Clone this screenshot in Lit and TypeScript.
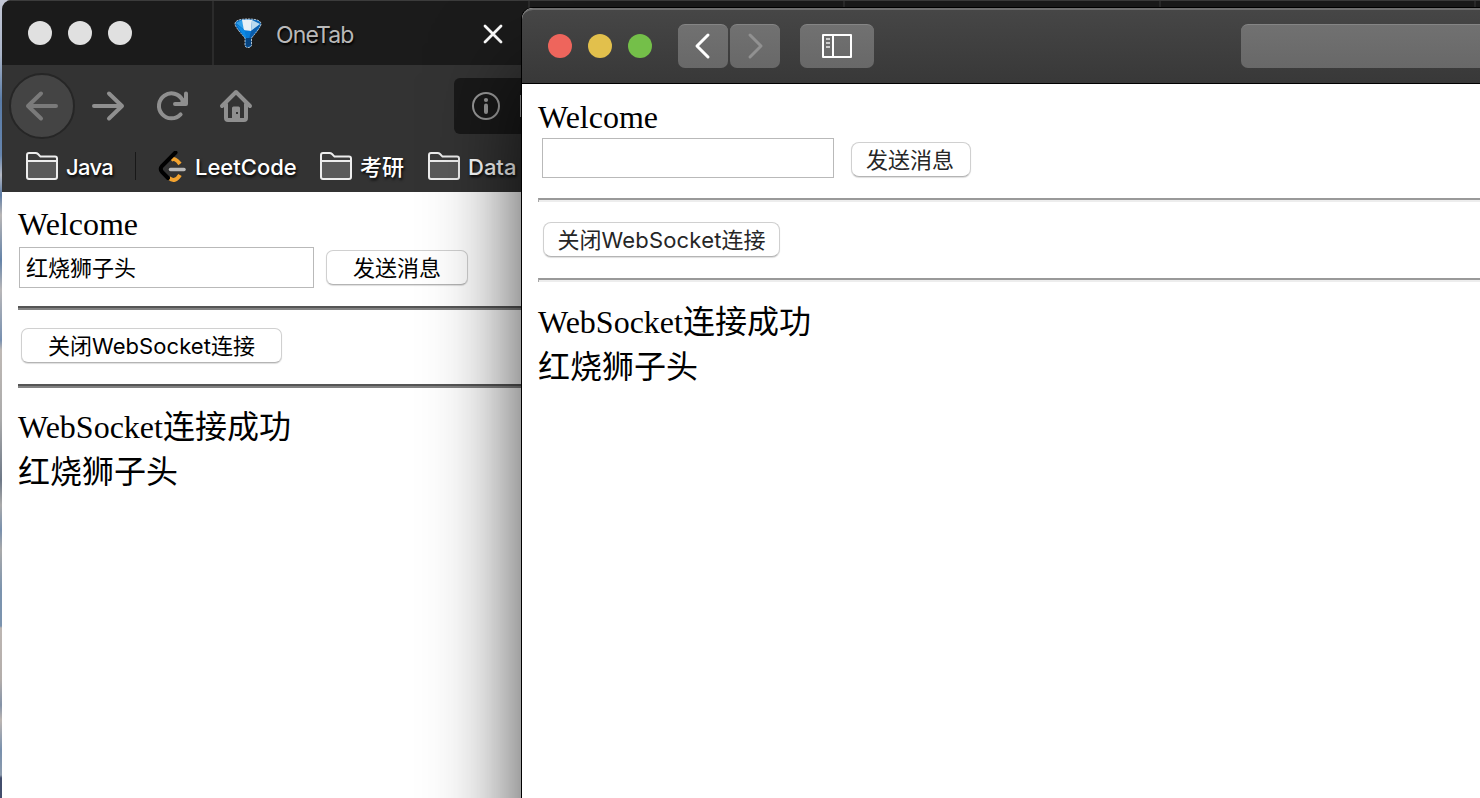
import { LitElement, html, css } from "lit";
import { customElement } from "lit/decorators.js";

const folder = html`<svg class="folder" width="34" height="30" viewBox="0 0 34 30">
  <path d="M2 26V4Q2 2 4 2H10.5Q12 2 13 3L15.5 5.6H30Q32 5.6 32 7.6V26Q32 28 30 28H4Q2 28 2 26Z" fill="#3c3c3c"/>
  <path d="M2 10H32V26Q32 28 30 28H4Q2 28 2 26Z" fill="#5a5a5a"/>
  <path d="M2 10H32M2 26V4Q2 2 4 2H10.5Q12 2 13 3L15.5 5.6H30Q32 5.6 32 7.6V26Q32 28 30 28H4Q2 28 2 26Z" fill="none" stroke="#ededed" stroke-width="2"/>
</svg>`;

@customElement("dark-browser")
class DarkBrowser extends LitElement {
  static styles = css`
    :host { display: flex; flex-direction: column; box-sizing: border-box; background: #fff; overflow: hidden;
      border-radius: 9px 0 0 0; font-family: Inter, "Noto Sans CJK SC", sans-serif; }
    .tabs { height: 65px; flex: none; box-sizing: border-box; border-top: 1px solid #3c3c3c; background: #1b1b1b; display: flex; }
    .lights { width: 210px; flex: none; box-sizing: border-box; padding: 20px 0 0 26px; display: flex; gap: 16px; }
    .light { width: 24px; height: 24px; border-radius: 50%; background: #e0e0e0; }
    .tab { width: 315.5px; flex: none; box-sizing: border-box; border-left: 2px solid #2b2b2b; display: flex; padding-left: 19px; }
    .gem { margin-top: 15px; flex: none; }
    .title { margin: 20px 0 0 13px; width: 200px; font-size: 23px; line-height: 28px; letter-spacing: -0.9px; color: #b9b9b9; text-shadow: 1px 2px 2px #000; }
    .close { margin: 22px 0 0 6px; flex: none; }
    .nav { height: 80px; flex: none; background: #333; display: flex; align-items: flex-start; }
    .back { width: 66px; height: 66px; margin: 8px 0 0 7px; box-sizing: border-box; border: 2px solid #262626; border-radius: 50%; background: #444; flex: none; display: flex; align-items: center; justify-content: center; }
    .ico { margin-top: 23px; flex: none; }
    .fwd { margin-left: 14px; }
    .reload { margin-left: 30px; }
    .home { margin-left: 30px; }
    .url { margin: 13px 0 0 201px; width: 900px; height: 56px; flex: none; border-radius: 6px; background: #191919; display: flex; align-items: center; }
    .info { margin-left: 17px; }
    .caret { margin-left: 19px; width: 2px; height: 22px; background: #999; }
    .marks { height: 47px; flex: none; background: #333; display: flex; align-items: flex-start; color: #fff; font-size: 22px; font-weight: 500; line-height: 30px; text-shadow: 1px 2px 3px #000; white-space: nowrap; }
    .marks svg { flex: none; margin-top: 6px; }
    .mark { display: flex; gap: 8px; margin-top: 0; }
    .mark span { margin-top: 7px; }
    .m1 { margin-left: 23px; width: 110px; gap: 7px; letter-spacing: -0.7px; }
    .rule { width: 1px; height: 28px; margin-top: 7px; background: #181818; }
    .m2 { margin-left: 21px; width: 162px; }
    .m3 { width: 108px; gap: 7px; }
    .m4 { gap: 7px; }
    .page { display: flex; flex-direction: column; padding: 14px 0 0 16px; color: #000; }
    .serif { font: 32px/36px "Liberation Serif", "Noto Sans CJK SC", serif; }
    .row { display: flex; margin-top: 5px; gap: 12px; padding-left: 1px; align-items: center; }
    .field { width: 295px; height: 41px; box-sizing: border-box; border: 1px solid #b9b9b9; padding-left: 6px; font-size: 22px; line-height: 40px; }
    .btn { box-sizing: border-box; height: 35px; border: 1px solid #d0d0d0; border-bottom-color: #b4b4b4; border-radius: 7px; background: #fff; font-size: 22px; line-height: 35px; text-align: center; box-shadow: 0 1px 1px #0002; white-space: nowrap; }
    .send { width: 142px; }
    .shut { width: 261px; margin: 18px 0 21px 3px; }
    .hr { height: 4px; box-sizing: border-box; border-top: 2px solid #555; background: #828282; }
    .first { margin-top: 18px; }
    .log { font: 32px/45px "Liberation Serif", "Noto Sans CJK SC", serif; margin-top: 17px; }
    .kern { letter-spacing: 0.05px; }
  `;
  render() {
    return html`
      <div class="tabs">
        <div class="lights"><i class="light"></i><i class="light"></i><i class="light"></i></div>
        <div class="tab">
          <svg class="gem" width="30" height="34" viewBox="0 0 30 34">
            <path d="M2 8Q2 3 15 3Q28 3 28 8Q28 11 18.500 22V29Q18 31.500 15 31.500Q12 31.500 12 29V22Q2 11 2 8Z" fill="#0768bd"/>
            <path d="M3 7L9 4L12 14.500Z" fill="#2f9fea"/><path d="M9 4Q14 3 19 4L18 15L11 14.500Z" fill="#e8f0f6"/>
            <path d="M19 4L27 8L18 15Z" fill="#b9d9ee"/><path d="M3 8L12 14.500L14 23L12 22Z" fill="#0c8ae6"/><path d="M18 15L27 8.500L18 22H16Z" fill="#0a5cab"/><path d="M11.500 14.500L18 15L16 23H14Z" fill="#087bd8"/><path d="M12.500 22H18V29.500L15 31L12.500 29.500Z" fill="#06437f"/>
            <path d="M2 8Q2 3 15 3Q28 3 28 8Q28 11 18.500 22V29Q18 31.500 15 31.500Q12 31.500 12 29V22Q2 11 2 8Z" fill="none" stroke="#e6eef5" stroke-opacity=".85" stroke-width=".9" stroke-dasharray="2.200 .8"/>
          </svg>
          <span class="title">OneTab</span>
          <svg class="close" width="22" height="22" viewBox="0 0 22 22"><path d="M3 3L19 19M19 3L3 19" stroke="#fff" stroke-width="2.8" stroke-linecap="round"/></svg>
        </div>
        <div class="tab"></div><div class="tab"></div><div class="tab"></div><div class="tab"></div>
      </div>
      <div class="nav">
        <div class="back"><svg width="36" height="36" viewBox="0 0 36 36"><path d="M32 18H4M17 5.500L4 18L17 30.500" fill="none" stroke="#7a7a7a" stroke-width="4" stroke-linecap="round" stroke-linejoin="round"/></svg></div>
        <svg class="ico fwd" width="36" height="36" viewBox="0 0 36 36"><path d="M5 18H33M20 5.500L33 18L20 30.500" fill="none" stroke="#8f8f8f" stroke-width="4" stroke-linecap="round" stroke-linejoin="round"/></svg>
        <svg class="ico reload" width="34" height="36" viewBox="0 0 34 36"><path d="M25.600 26.400A12.500 12.500 0 1 1 27.500 12" fill="none" stroke="#8f8f8f" stroke-width="4" stroke-linecap="round"/><path d="M20 16H31V5.500" fill="none" stroke="#8f8f8f" stroke-width="4" stroke-linecap="round" stroke-linejoin="round"/><path d="M24 15L31 8V16Z" fill="#8f8f8f"/></svg>
        <svg class="ico home" width="34" height="36" viewBox="0 0 34 36"><path d="M3 18L17 4L31 18M7 16V30Q7 32 9 32H25Q27 32 27 30V16" fill="none" stroke="#8f8f8f" stroke-width="4" stroke-linecap="round" stroke-linejoin="round"/><path d="M13 31V20Q13 18.500 14.500 18.500H19.500Q21 18.500 21 20V31Z" fill="#8f8f8f"/><path d="M17 24H19V26H17Z" fill="#333"/></svg>
        <div class="url">
          <svg class="info" width="30" height="30" viewBox="0 0 30 30"><circle cx="15" cy="15" r="13" fill="none" stroke="#999" stroke-width="2"/><circle cx="15" cy="9" r="2.100" fill="#999"/><path d="M15 14.500V21" stroke="#999" stroke-width="4" stroke-linecap="round"/></svg>
          <i class="caret"></i>
        </div>
      </div>
      <div class="marks">
        <div class="mark m1">${folder}<span>Java</span></div>
        <i class="rule"></i>
        <div class="mark m2">
          <svg width="30" height="34" viewBox="0 0 30 34" fill="none" stroke-width="4" stroke-linecap="round"><path d="M14 9Q18 6 23 13M12 27Q18 32 23 24" stroke="#f3a32f" stroke-linecap="butt"/><path d="M18.500 1.500L5 15Q2.500 18 5 21L11 27" stroke="#000"/><path d="M13.500 18.500H27" stroke="#b8b8b8" stroke-width="3.500"/></svg>
          <span>LeetCode</span>
        </div>
        <div class="mark m3">${folder}<span>考研</span></div>
        <div class="mark m4">${folder}<span>Data</span></div>
      </div>
      <div class="page">
        <div class="serif">Welcome</div>
        <div class="row"><div class="field">红烧狮子头</div><div class="btn send">发送消息</div></div>
        <div class="hr first"></div>
        <div class="btn shut">关闭<span class="kern">WebSocket</span>连接</div>
        <div class="hr"></div>
        <div class="log">WebSocket连接成功<br>红烧狮子头</div>
      </div>`;
  }
}

@customElement("light-browser")
class LightBrowser extends LitElement {
  static styles = css`
    :host { display: flex; flex-direction: column; background: #fff; border-radius: 11px 0 0 0;
      box-shadow: 0 0 0 1px #000, 0 64px 90px rgba(0,0,0,.76); font-family: Inter, "Noto Sans CJK SC", sans-serif; }
    .bar { height: 76px; flex: none; box-sizing: border-box; border-radius: 11px 0 0 0; border-top: 2px solid #6e6e6e; border-bottom: 1px solid #000;
      background: linear-gradient(#464646, #383838); display: flex; padding: 14px 0 0 26px; overflow: hidden; }
    .light { width: 24px; height: 24px; margin: 10px 16px 0 0; border-radius: 50%; flex: none; }
    .red { background: #ee655c; } .yellow { background: #e2c04c; } .green { background: #74bf49; margin-right: 26px; }
    .tool { height: 44px; width: 50px; box-sizing: border-box; border-radius: 7px; border-top: 1px solid #858585; background: linear-gradient(#717171, #686868); flex: none; display: flex; align-items: center; justify-content: center; padding-bottom: 1px; }
    .next { margin-left: 2px; }
    .side { width: 74px; margin-left: 20px; padding-bottom: 1px; }
    .address { width: 400px; margin-left: 367px; }
    .page { display: flex; flex-direction: column; padding: 15px 0 0 16px; color: #000; }
    .serif { font: 32px/36px "Liberation Serif", "Noto Sans CJK SC", serif; }
    .row { display: flex; margin-top: 3px; gap: 17px; padding-left: 4px; align-items: flex-start; }
    .field { width: 292px; height: 40px; box-sizing: border-box; border: 1px solid #b9b9b9; }
    .btn { box-sizing: border-box; height: 35px; border: 1px solid #d0d0d0; border-bottom-color: #b4b4b4; border-radius: 8px; background: #fff; font-size: 22px; line-height: 34px; text-align: center; box-shadow: 0 1px 1px #0002; white-space: nowrap; color: #262626; }
    .send { width: 120px; margin-top: 4px; padding-right: 2px; }
    .shut { width: 237px; margin: 20px 0 21px 5px; }
    .hr { height: 4px; box-sizing: border-box; border-top: 2px solid #999; border-left: 1px solid #aaa; background: #ededed; }
    .first { margin-top: 20px; }
    .log { font: 32px/45px "Liberation Serif", "Noto Sans CJK SC", serif; margin-top: 18px; }
    .kern { letter-spacing: 0.2px; }
  `;
  render() {
    return html`
      <div class="bar">
        <i class="light red"></i><i class="light yellow"></i><i class="light green"></i>
        <div class="tool"><svg width="20" height="28" viewBox="0 0 20 28"><path d="M15 3L4 14L15 25" fill="none" stroke="#fff" stroke-width="3" stroke-linecap="round" stroke-linejoin="round"/></svg></div>
        <div class="tool next"><svg width="20" height="28" viewBox="0 0 20 28"><path d="M5 3L16 14L5 25" fill="none" stroke="#919191" stroke-width="3" stroke-linecap="round" stroke-linejoin="round"/></svg></div>
        <div class="tool side"><svg width="30" height="24" viewBox="0 0 30 24"><path d="M1 1H29V23H1ZM11 1V23" fill="none" stroke="#fff" stroke-width="2" stroke-linejoin="round"/><path d="M4 5H8M4 9H8M4 13H8" stroke="#ccc" stroke-width="2"/></svg></div>
        <div class="tool address"></div>
      </div>
      <div class="page">
        <div class="serif">Welcome</div>
        <div class="row"><div class="field"></div><div class="btn send">发送消息</div></div>
        <div class="hr first"></div>
        <div class="btn shut">关闭<span class="kern">WebSocket</span>连接</div>
        <div class="hr"></div>
        <div class="log">WebSocket连接成功<br>红烧狮子头</div>
      </div>`;
  }
}

@customElement("app-root")
class AppRoot extends LitElement {
  static styles = css`
    :host { display: block; position: relative; width: 1480px; height: 798px; overflow: hidden;
      background: linear-gradient(#c4c8d6 0, #a9b4c8 55px, #5a7ca8 100px, #6685ae 155px, #b5b9c4 175px, #5d7ca5 195px, #b9b6b5 215px, #6483a8 260px, #b9b7b8 290px, #7790b0 340px, #bfb9b5 350px, #aaa 420px, #6d7887 480px, #aaa 505px, #7890ad 530px, #aaa 550px, #7b93ae 590px, #7b93ae 626px, #bdb6b2 628px, #b3adaa 680px, #8493a8 705px, #bdb6b2 720px, #7890ad 750px, #8c9bad 775px, #424d6c 778px); }
    .rear { position: absolute; left: 2px; top: 0; width: 1478px; height: 798px; }
    .front { position: absolute; left: 522px; top: 8px; width: 1200px; height: 900px; }
  `;
  render() {
    return html`<dark-browser class="rear"></dark-browser><light-browser class="front"></light-browser>`;
  }
}
